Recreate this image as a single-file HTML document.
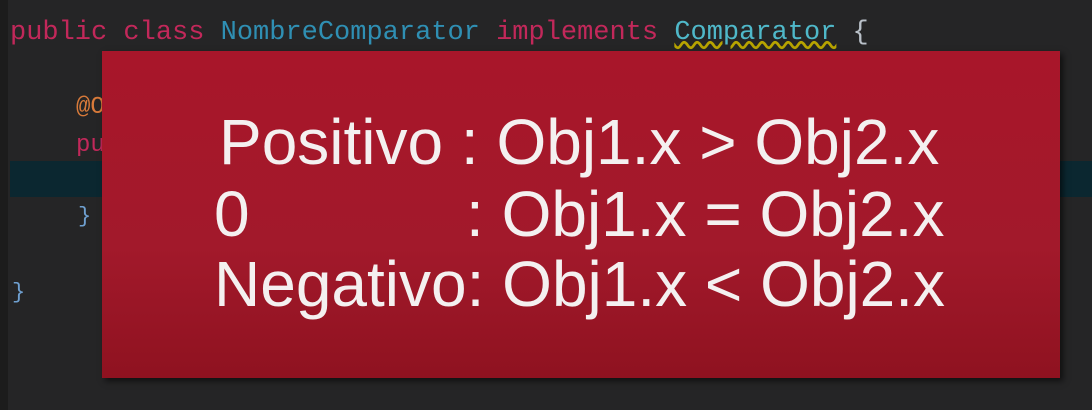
<!DOCTYPE html>
<html><head><style>
body{margin:0;width:1092px;height:410px;background:#252526;overflow:hidden;position:relative;font-family:"Liberation Mono",monospace}
.c{position:absolute;font-size:27px;white-space:pre;line-height:1}
.k{color:#c2285a}.b{color:#2f8fb3}.g{color:#b9c0c8}
#box{position:absolute;left:102px;top:51px;width:958px;height:327px;background:linear-gradient(180deg,#a8162a 0%,#a2192b 60%,#8f1220 100%);box-shadow:3px 3px 6px rgba(0,0,0,.6)}
.t{position:absolute;color:#f4f0f0;font-family:"Liberation Sans",Arial,sans-serif;font-size:64px;white-space:pre;line-height:1}
</style></head><body>
<div style="position:absolute;left:0;top:0;width:8px;height:410px;background:#1c1c1c"></div>
<div style="position:absolute;left:10px;top:161px;width:1082px;height:36px;background:#0b2730"></div>
<div class="c" style="left:10px;top:20px"><span class="k">public class </span><span class="b">NombreComparator </span><span class="k">implements </span><span class="b" style="color:#4fb8c9;text-decoration:underline wavy #b8a400">Comparator</span><span class="g"> {</span></div>
<div class="c" style="left:76px;top:96px;color:#d87a3a;font-size:24px">@O</div>
<div class="c k" style="left:76px;top:134px;font-size:24px">pu</div>
<div class="c g" style="left:78px;top:206px;font-size:22px;color:#6fa0d0">}</div>
<div class="c g" style="left:12px;top:282px;font-size:22px;color:#6fa0d0">}</div>
<div id="box"></div>
<div class="t" style="left:219px;top:110px">Positivo : Obj1.x &gt; Obj2.x</div>
<div class="t" style="left:214px;top:182px">0</div>
<div class="t" style="left:466px;top:182px">: Obj1.x = Obj2.x</div>
<div class="t" style="left:214px;top:252px">Negativo: Obj1.x &lt; Obj2.x</div>
</body></html>
